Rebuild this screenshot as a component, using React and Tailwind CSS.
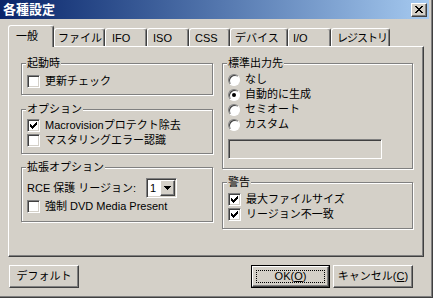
import React from "react";

const ui = "font-['Liberation_Sans','Noto_Sans_CJK_JP',sans-serif]";
const raised = "border border-t-white border-l-white border-r-[#404040] border-b-[#404040] shadow-[inset_-1px_-1px_0_#808080] bg-[#d4d0c8]";
const sunken = "border border-t-[#808080] border-l-[#808080] border-r-white border-b-white shadow-[inset_1px_1px_0_#404040,inset_-1px_-1px_0_#d4d0c8]";

const tabs = [
  { label: "ファイル", w: "w-[51px]", pl: "pl-[3px]" },
  { label: "IFO", w: "w-[42px]", pl: "pl-[6px]" },
  { label: "ISO", w: "w-[42px]", pl: "pl-[5px]" },
  { label: "CSS", w: "w-[41px]", pl: "pl-[5px]" },
  { label: "デバイス", w: "w-[58px]", pl: "pl-[4px]" },
  { label: "I/O", w: "w-[43px]", pl: "pl-[4px]" },
  { label: "レジストリ", w: "w-[59px]", pl: "pl-[5px] tracking-[-1px]" },
];

function CheckBox({ checked }) {
  return (
    <span className={`flex h-[13px] w-[13px] shrink-0 items-center justify-center bg-white ${sunken}`}>
      {checked && (
        <svg width="7" height="7" viewBox="0 0 7 7" shapeRendering="crispEdges">
          <path d="M0 2h1v3H0zM1 3h1v3H1zM2 4h1v3H2zM3 3h1v3H3zM4 2h1v3H4zM5 1h1v3H5zM6 0h1v3H6z" fill="#000" />
        </svg>
      )}
    </span>
  );
}

function Radio({ checked }) {
  return (
    <span className="flex h-[12px] w-[12px] shrink-0 items-center justify-center rounded-full border border-t-[#808080] border-l-[#808080] border-r-white border-b-white bg-white shadow-[inset_1px_1px_0_#404040]">
      {checked && <span className="h-[4px] w-[4px] rounded-full bg-black" />}
    </span>
  );
}

function Row({ children, text }) {
  return (
    <div className="flex h-[15px] items-center gap-[5px] leading-none">
      {children}
      <span>{text}</span>
    </div>
  );
}

function Group({ title, className, children }) {
  return (
    <div className={`relative border border-[#808080] pl-[5px] shadow-[inset_1px_1px_0_#fff,1px_1px_0_#fff] ${className}`}>
      <span className="absolute -top-[7px] left-[4px] bg-[#d4d0c8] px-px leading-[13px]">{title}</span>
      {children}
    </div>
  );
}

export default function App() {
  return (
    <div className={`flex h-[298px] w-[433px] flex-col overflow-hidden whitespace-nowrap bg-[#d4d0c8] text-[11px] text-black shadow-[inset_-1px_-1px_0_#404040,inset_-2px_-2px_0_#808080] ${ui}`}>
      {/* タイトルバー */}
      <div className="mr-[4px] flex h-[19px] items-center justify-between bg-linear-to-r from-[#0a246a] to-[#a6caf0] pl-[3px]">
        <span className="text-[13px] font-bold leading-none text-white">各種設定</span>
        <span className={`mr-[2px] flex h-[14px] w-[16px] items-center justify-center ${raised}`}>
          <svg width="8" height="7" viewBox="0 0 8 7" shapeRendering="crispEdges">
            <path d="M0 0h2v1H0zM6 0h2v1H6zM1 1h2v1H1zM5 1h2v1H5zM2 2h4v1H2zM3 3h2v1H3zM2 4h4v1H2zM1 5h2v1H1zM5 5h2v1H5zM0 6h2v1H0zM6 6h2v1H6z" fill="#000" />
          </svg>
        </span>
      </div>

      {/* タブ */}
      <div className="mt-[6px] flex h-[21px] items-end pl-[8px]">
        <div className="relative z-10 -mb-px flex h-[22px] w-[46px] items-center rounded-t-[3px] border-l border-t border-r border-l-white border-t-white border-r-[#404040] bg-[#d4d0c8] pl-[7px] leading-none shadow-[inset_-1px_0_0_#808080]">
          一般
        </div>
        {tabs.map((t) => (
          <div key={t.label} className={`flex h-[18px] items-center rounded-t-[3px] border-l border-t border-r border-l-white border-t-white border-r-[#404040] pt-[2px] leading-none shadow-[inset_-1px_0_0_#808080] ${t.w} ${t.pl}`}>
            {t.label}
          </div>
        ))}
      </div>

      {/* パネル */}
      <div className="ml-[8px] flex h-[211px] w-[416px] gap-[9px] border border-t-white border-l-white border-r-[#404040] border-b-[#404040] pl-[12px] pt-[16px] shadow-[inset_-1px_-1px_0_#808080]">
        <div className="flex w-[192px] flex-col">
          <Group title="起動時" className="h-[32px] pt-[10px]">
            <Row text="更新チェック"><CheckBox /></Row>
          </Group>
          <Group title="オプション" className="mt-[14px] h-[45px] pt-[8px]">
            <Row text="Macrovisionプロテクト除去"><CheckBox checked /></Row>
            <Row text="マスタリングエラー認識"><CheckBox /></Row>
          </Group>
          <Group title="拡張オプション" className="mt-[13px] h-[55px] pt-[10px]">
            <div className="flex h-[20px] items-center leading-none">
              <span className="w-[119px]">RCE 保護 リージョン:</span>
              <div className={`flex h-[20px] w-[31px] bg-white p-px ${sunken}`}>
                <span className="flex flex-1 items-center pl-[2px] leading-none">1</span>
                <span className={`flex h-[16px] w-[15px] items-center justify-center ${raised}`}>
                  <svg width="7" height="4" viewBox="0 0 7 4" shapeRendering="crispEdges">
                    <path d="M0 0h7v1H0zM1 1h5v1H1zM2 2h3v1H2zM3 3h1v1H3z" fill="#000" />
                  </svg>
                </span>
              </div>
            </div>
            <div className="mt-[1px]">
              <Row text="強制 DVD Media Present"><CheckBox /></Row>
            </div>
          </Group>
        </div>

        <div className="flex w-[191px] flex-col">
          <Group title="標準出力先" className="h-[106px] pt-[8px]">
            <Row text="なし"><Radio /></Row>
            <Row text="自動的に生成"><Radio checked /></Row>
            <Row text="セミオート"><Radio /></Row>
            <Row text="カスタム"><Radio /></Row>
            <div className={`mt-[7px] h-[20px] w-[154px] bg-[#d4d0c8] ${sunken}`} />
          </Group>
          <Group title="警告" className="mt-[13px] h-[47px] pt-[9px]">
            <Row text="最大ファイルサイズ"><CheckBox checked /></Row>
            <Row text="リージョン不一致"><CheckBox checked /></Row>
          </Group>
        </div>
      </div>

      {/* ボタン */}
      <div className="mt-[8px] flex items-start justify-between pl-[9px] pr-[20px] leading-none">
        <button className={`flex h-[23px] w-[70px] items-center justify-center ${raised}`}>デフォルト</button>
        <div className="flex gap-[3px]">
          <div className="h-[23px] w-[79px] border border-black">
            <button className={`relative flex h-full w-full items-center justify-center ${raised}`}>
              <span className="absolute inset-[3px] border border-dotted border-black" />
              OK(<span className="underline">O</span>)
            </button>
          </div>
          <button className={`flex h-[23px] w-[80px] items-center justify-center ${raised}`}>
            キャンセル(<span className="underline">C</span>)
          </button>
        </div>
      </div>
    </div>
  );
}
